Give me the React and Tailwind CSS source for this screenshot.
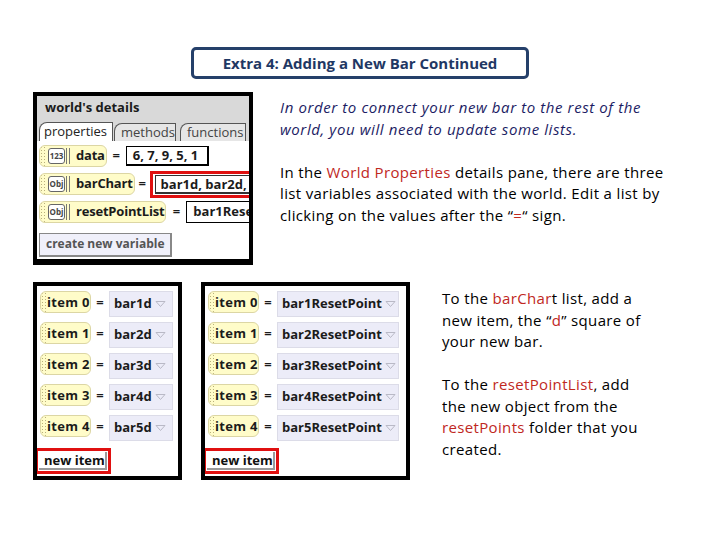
import React from 'react';

const ui = "font-['Open_Sans',sans-serif]";
const body = "font-['Open_Sans',sans-serif]";

function Handle() {
  return (
    <span className="w-[6px] self-stretch shrink-0 bg-[radial-gradient(#b9b07c_0.8px,transparent_0.9px)] bg-[length:3px_3px]" />
  );
}

function Caret() {
  return (
    <svg width="11" height="8" viewBox="0 0 11 8" className="shrink-0 ml-[3px]">
      <path d="M1 1.5 L10 1.5 L5.5 6.5 Z" fill="none" stroke="#b9b9c6" strokeWidth="1" />
    </svg>
  );
}

function ItemRow({ n, value, valueW }) {
  return (
    <div className="flex items-start h-[26px] shrink-0">
      <div className="flex items-center shrink-0 h-[22px] w-[51px] rounded-[6px] border border-[#dcd6a4] bg-[#fffcc9] overflow-hidden">
        <Handle />
        <span className="text-[13px] tracking-[0.3px] font-bold text-[#1b1b1b] whitespace-nowrap leading-none">item {n}</span>
      </div>
      <span className="w-[18px] shrink-0 text-center text-[13px] font-bold text-[#1b1b1b] leading-[22px]">=</span>
      <div
        className={`flex items-center justify-between shrink-0 h-[26px] pl-[4px] pr-[12px] bg-[#ececf8] border border-[#dcdce8] ${valueW}`}
      >
        <span className="text-[13px] font-bold text-[#1b1b1b] whitespace-nowrap">{value}</span>
        <Caret />
      </div>
    </div>
  );
}

function NewItem() {
  return (
    <div className="mt-[2px] ml-[-5px] w-[76px] h-[26px] shrink-0 border-[3px] border-[#e01010] p-[1px] pl-[1px] flex items-center">
      <div className="h-[18px] w-[68px] bg-white border-r-2 border-b-2 border-[#9a9a9a] flex items-center pl-[5px]">
        <span className="text-[13px] font-bold text-[#111] whitespace-nowrap leading-none">new item</span>
      </div>
    </div>
  );
}

function ListPanel({ items, width, valueW }) {
  return (
    <div className={`border-[4px] border-black bg-white h-[198px] pt-[5px] pl-[3px] flex flex-col gap-[5px] overflow-hidden ${width} ${ui}`}>
      {items.map((v, i) => (
        <ItemRow key={i} n={i} value={v} valueW={valueW} />
      ))}
      <NewItem />
    </div>
  );
}

function TypeIcon({ label }) {
  return (
    <span className="flex items-center shrink-0 h-[16px] ml-[2px] mr-[6px]">
      <span className="h-[16px] w-[17px] rounded-[3px] border border-[#666] bg-white text-[8px] font-bold leading-[14px] text-center text-[#444]">
        {label}
      </span>
      <span className="ml-[1px] h-[16px] w-[4px] border-x border-[#777]" />
    </span>
  );
}

function VarRow({ icon, name, eqW, children }) {
  return (
    <div className="flex items-center h-[22px] shrink-0">
      <div className="flex items-center shrink-0 h-[22px] pr-[1px] rounded-[6px] border border-[#dcd6a4] bg-[#fffcc9] overflow-hidden">
        <Handle />
        <TypeIcon label={icon} />
        <span className="text-[13px] tracking-[-0.2px] font-bold text-[#1b1b1b] whitespace-nowrap">{name}</span>
      </div>
      <span className={`shrink-0 text-center text-[13px] font-bold text-[#1b1b1b] ${eqW}`}>=</span>
      {children}
    </div>
  );
}

function WorldDetails() {
  return (
    <div className={`w-[220px] h-[173px] shrink-0 border-[4px] border-b-[6px] border-black bg-white overflow-hidden ${ui}`}>
      <div className="bg-[#d9d9d9] pt-[2px]">
        <div className="pl-[8px] text-[13px] font-bold text-[#1b1b1b] leading-[18px] whitespace-nowrap">world's details</div>
        <div className="flex items-end pl-[2px] mt-[6px] h-[19px] whitespace-nowrap">
          <div className="h-[19px] w-[74px] pl-[4px] bg-white border border-b-0 border-[#555] rounded-tl-[8px] text-[13px] text-[#222] leading-[17px]">
            properties
          </div>
          <div className="h-[18px] w-[62px] ml-[1px] pl-[6px] bg-[#e6e6e6] border border-b-0 border-[#555] rounded-tl-[8px] text-[13px] text-[#444] leading-[16px]">
            methods
          </div>
          <div className="h-[18px] w-[66px] ml-[4px] pl-[6px] bg-[#e6e6e6] border border-b-0 border-[#555] rounded-tl-[8px] text-[13px] text-[#444] leading-[16px]">
            functions
          </div>
        </div>
      </div>
      <div className="pl-[2px] pt-[4px] flex flex-col gap-[6px]">
        <VarRow icon="123" name="data" eqW="w-[19px]">
          <div className="shrink-0 h-[20px] w-[83px] pl-[6px] border border-black bg-white border-r-2 border-b-2 text-[13px] font-bold text-[#1b1b1b] leading-[17px] whitespace-nowrap">
            6, 7, 9, 5, 1
          </div>
        </VarRow>
        <VarRow icon="Obj" name="barChart" eqW="w-[15px]">
          <div className="h-[27px] w-[110px] shrink-0 border-[3px] border-r-0 border-[#e01010] pl-[2px] py-[1px] flex items-center">
            <div className="h-full pl-[5px] bg-white border border-[#333] border-b-2 text-[13px] font-bold text-[#1b1b1b] leading-[17px] whitespace-nowrap w-full">
              bar1d, bar2d, bar3d
            </div>
          </div>
        </VarRow>
        <VarRow icon="Obj" name="resetPointList" eqW="w-[20px]">
          <div className="h-[22px] w-[80px] shrink-0 pl-[6px] border border-black bg-white text-[13px] font-bold text-[#1b1b1b] leading-[19px] whitespace-nowrap">
            bar1ResetPoint
          </div>
        </VarRow>
        <div className="mt-[4px] w-[133px] h-[24px] bg-[#f0f0fa] border border-[#888] border-r-2 border-b-2 pl-[6px] text-[12px] font-bold text-[#555] leading-[20px] whitespace-nowrap">
          create new variable
        </div>
      </div>
    </div>
  );
}

const red = 'text-[#c0281e]';

export default function App() {
  return (
    <div className={`w-[720px] h-[540px] bg-white overflow-hidden ${body}`}>
      <div className="pt-[47px] flex justify-center">
        <div className="w-[338px] h-[32px] border-[3px] border-[#25406a] rounded-[5px] flex items-center justify-center text-[15px] font-bold text-[#1f3864] whitespace-nowrap">
          Extra 4: Adding a New Bar Continued
        </div>
      </div>

      <div className="flex mt-[13px] pl-[33px]">
        <WorldDetails />
        <div className="ml-[27px] pt-[5px] text-[15px] leading-[21.5px] text-black whitespace-nowrap">
          <p className="italic tracking-[0.6px] text-[#1c1c64]">
            In order to connect your new bar to the rest of the
            <br />
            world, you will need to update some lists.
          </p>
          <p className="mt-[21.5px] tracking-[0.35px]">
            In the <span className={red}>World Properties</span> details pane, there are three
            <br />
            list variables associated with the world. Edit a list by
            <br />
            clicking on the values after the “<span className={red}>=</span>“ sign.
          </p>
        </div>
      </div>

      <div className="flex mt-[17px] pl-[33px]">
        <ListPanel items={['bar1d', 'bar2d', 'bar3d', 'bar4d', 'bar5d']} width="w-[149px]" valueW="w-[64px]" />
        <div className="ml-[19px]">
          <ListPanel
            items={['bar1ResetPoint', 'bar2ResetPoint', 'bar3ResetPoint', 'bar4ResetPoint', 'bar5ResetPoint']}
            width="w-[209px]"
            valueW="w-[122px]"
          />
        </div>
        <div className="ml-[32px] pt-[6px] text-[15px] tracking-[0.35px] leading-[21.5px] text-black whitespace-nowrap">
          <p>
            To the <span className={red}>barChar</span>t list, add a
            <br />
            new item, the “<span className={red}>d</span>” square of
            <br />
            your new bar.
          </p>
          <p className="mt-[21.5px]">
            To the <span className={red}>resetPointList</span>, add
            <br />
            the new object from the
            <br />
            <span className={red}>resetPoints</span> folder that you
            <br />
            created.
          </p>
        </div>
      </div>
    </div>
  );
}
